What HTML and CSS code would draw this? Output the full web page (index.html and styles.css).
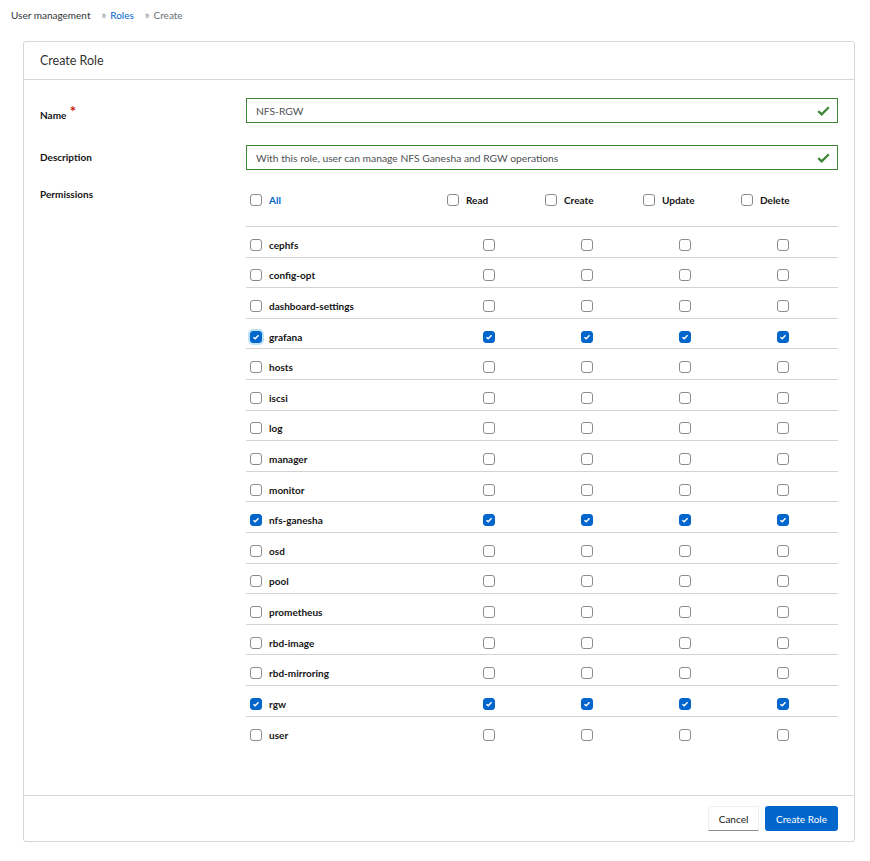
FILE: index.html
```html
<!DOCTYPE html>
<html>
<head>
<meta charset="utf-8">
<link rel="stylesheet" href="styles.css">
</head>
<body>
<nav class="breadcrumb">
  <span class="crumb">User management</span>
  <span class="sep">»</span>
  <span class="crumb link">Roles</span>
  <span class="sep">»</span>
  <span class="crumb current">Create</span>
</nav>

<div class="card">
  <div class="card-header">Create Role</div>
  <div class="card-body">
    <div class="form-row">
      <label class="form-label">Name <span class="req">*</span></label>
      <div class="input valid">
        <span class="input-text">NFS-RGW</span>
        <svg class="ok" viewBox="0 0 14 11" width="13" height="10"><path d="M1.2 5.6 L5 9.2 L12.8 1.4" fill="none" stroke="#3e8635" stroke-width="2.4"/></svg>
      </div>
    </div>
    <div class="form-row desc-row">
      <label class="form-label">Description</label>
      <div class="input valid">
        <span class="input-text">With this role, user can manage NFS Ganesha and RGW operations</span>
        <svg class="ok" viewBox="0 0 14 11" width="13" height="10"><path d="M1.2 5.6 L5 9.2 L12.8 1.4" fill="none" stroke="#3e8635" stroke-width="2.4"/></svg>
      </div>
    </div>
    <div class="form-row perm-row">
      <label class="form-label">Permissions</label>
      <div class="perm-table">
        <div class="perm-head">
          <div class="hcell"><span class="cb"></span><span class="all">All</span></div>
          <div class="hcell"><span class="cb"></span><span>Read</span></div>
          <div class="hcell"><span class="cb"></span><span>Create</span></div>
          <div class="hcell"><span class="cb"></span><span>Update</span></div>
          <div class="hcell"><span class="cb"></span><span>Delete</span></div>
        </div>
        <div id="rows"></div>
      </div>
    </div>
  </div>
  <div class="card-footer">
    <button class="btn btn-secondary">Cancel</button>
    <button class="btn btn-primary">Create Role</button>
  </div>
</div>
<script src="app.js"></script>
</body>
</html>
```

FILE: app.js
```js
const scopes = ["cephfs","config-opt","dashboard-settings","grafana","hosts","iscsi","log","manager","monitor","nfs-ganesha","osd","pool","prometheus","rbd-image","rbd-mirroring","rgw","user"];
const checked = new Set(["grafana","nfs-ganesha","rgw"]);
const rows = document.getElementById("rows");
const check = '<svg viewBox="0 0 10 10" width="8" height="8"><path d="M1.8 5.2 L4 7.2 L8.2 2.8" fill="none" stroke="#fff" stroke-width="1.8"/></svg>';
scopes.forEach(s => {
  const on = checked.has(s);
  const row = document.createElement("div");
  row.className = "prow";
  const cb = cls => `<span class="cb${on ? " on" : ""}${cls || ""}">${on ? check : ""}</span>`;
  row.innerHTML = `<div class="pcell first">${cb(s === "grafana" ? " focus" : "")}<span class="scope">${s}</span></div>` +
    [0,1,2,3].map(() => `<div class="pcell c">${cb()}</div>`).join("");
  rows.appendChild(row);
});
```

FILE: styles.css
```css
* { box-sizing: border-box; }
html, body { margin: 0; padding: 0; background: #fff; }
body {
  font-family: "Lato", "Open Sans", "Liberation Sans", sans-serif;
  color: #151515;
  font-size: 11px;
}
.breadcrumb {
  display: flex;
  align-items: center;
  height: 29px;
  padding-left: 11px;
  font-size: 10px;
  color: #333;
}
.breadcrumb .sep { color: #8a8d90; font-size: 11px; margin: 0 4px 0 11px; }
.crumb.link { color: #0066cc; }
.crumb.current { color: #6a6e73; }

.card {
  margin: 12px 0 0 23px;
  width: 832px;
  border: 1px solid #d6d6d6;
  border-radius: 3px;
}
.card-header {
  height: 38px;
  display: flex;
  align-items: center;
  padding-left: 16px;
  font-size: 12.5px;
  color: #333;
  border-bottom: 1px solid #d6d6d6;
}
.card-body {
  padding: 18px 16px 48px 16px;
}
.form-row {
  display: flex;
  margin-bottom: 22px;
}
.form-row.desc-row { margin-bottom: 13px; }
.form-row.perm-row { margin-bottom: 0; }
.form-label {
  width: 206px;
  flex: none;
  font-weight: 700;
  font-size: 10px;
  padding-top: 6px;
  color: #151515;
}
.form-row:first-child .form-label { padding-top: 10px; }
.req {
  color: #c9190b;
  font-size: 15px;
  line-height: 10px;
  position: relative;
  top: -2px;
  margin-left: 1px;
}
.perm-row .form-label { padding-top: 5px; }
.input {
  flex: 1;
  height: 25px;
  border: 1px solid #3e8635;
  display: flex;
  align-items: center;
  justify-content: space-between;
  padding: 0 7px 0 9px;
  font-size: 10.3px;
  color: #4f5255;
}
.ok { display: block; }
.perm-table { flex: 1; }
.perm-head, .prow {
  display: grid;
  grid-template-columns: 194px 98px 98px 98px 98px 1fr;
}
.perm-head {
  height: 44px;
  padding-top: 11px;
  border-bottom: 1px solid #d2d2d2;
}
.hcell {
  display: flex;
  align-items: flex-start;
  gap: 7px;
  font-size: 10px;
  font-weight: 700;
  color: #151515;
  padding-left: 7px;
}
.hcell:first-child { padding-left: 4px; }
.hcell span:not(.cb) { line-height: 12px; }
.hcell .all { color: #0066cc; }
.prow {
  height: 30.6px;
  border-bottom: 1px solid #d2d2d2;
}
.prow:last-child { border-bottom: none; }
.pcell {
  display: flex;
  align-items: center;
  padding-top: 6px;
}
.pcell.first { padding-left: 4px; gap: 7px; }
.pcell.c { justify-content: center; }
.scope { font-size: 10px; font-weight: 700; color: #151515; }
.cb {
  width: 12px;
  height: 12px;
  flex: none;
  border: 1px solid #8a8d90;
  border-radius: 3px;
  background: #fff;
  display: inline-flex;
  align-items: center;
  justify-content: center;
}
.cb.on { background: #0066cc; border-color: #0066cc; }
.cb.focus { box-shadow: 0 0 0 2px #bee1f4; }
.card-footer {
  border-top: 1px solid #d6d6d6;
  height: 46px;
  display: flex;
  justify-content: flex-end;
  align-items: center;
  gap: 6px;
  padding-right: 16px;
}
.btn {
  font-family: inherit;
  height: 25px;
  font-size: 10px;
  border-radius: 3px;
  padding: 0 9px;
  cursor: pointer;
}
.btn-secondary {
  background: #fff;
  color: #151515;
  border: 1px solid #f0f0f0;
  border-bottom-color: #8a8d90;
  border-radius: 0;
  width: 51px;
}
.btn-primary {
  background: #0066cc;
  color: #fff;
  border: none;
  width: 73px;
}
```
